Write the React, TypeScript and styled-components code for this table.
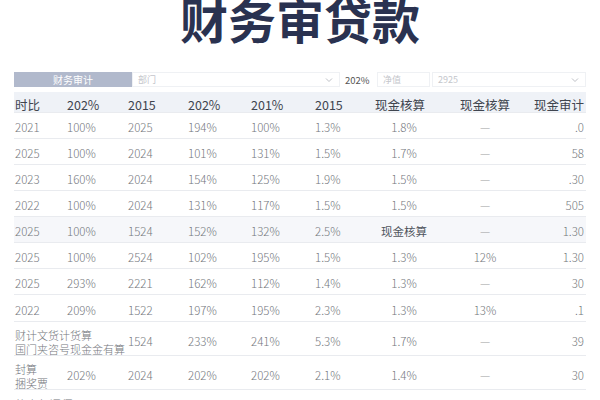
import React from "react";
import styled, { createGlobalStyle } from "styled-components";

const Global = createGlobalStyle`
  html, body { margin: 0; padding: 0; background: #ffffff; }
  body { font-family: "Noto Sans CJK SC", "Noto Sans", sans-serif; overflow: hidden; }
`;

const Page = styled.div`
  width: 600px;
  height: 400px;
  overflow: hidden;
  box-sizing: border-box;
  padding: 0 14px;
  display: flex;
  flex-direction: column;
`;

const Title = styled.h1`
  margin: 0;
  text-align: center;
  font-size: 48px;
  line-height: 36px;
  font-weight: 700;
  color: #2a3250;
  letter-spacing: 0;
`;

const FilterBar = styled.div`
  margin-top: 36px;
  height: 17px;
  display: flex;
  align-items: stretch;
  font-size: 9px;
  color: #c4c6cb;
`;

const FilterLabel = styled.div`
  width: 118px;
  background: #b1b9cc;
  color: #ffffff;
  font-size: 10px;
  display: flex;
  align-items: center;
  justify-content: center;
`;

const Field = styled.div<{ $w: number }>`
  width: ${(p) => p.$w}px;
  box-sizing: border-box;
  border: 1px solid #eff1f4;
  background: #fff;
  display: flex;
  align-items: center;
  justify-content: space-between;
  padding: 0 6px 0 5px;
`;

const FilterValue = styled.div`
  width: 37px;
  display: flex;
  align-items: center;
  padding-left: 5px;
  box-sizing: border-box;
  font-size: 9.5px;
  color: #555;
`;

const Gap = styled.div`
  width: 2px;
`;

const Chevron = () => (
  <svg width="8" height="6" viewBox="0 0 8 6">
    <path d="M1 1.5 L4 4.5 L7 1.5" fill="none" stroke="#b5b8be" strokeWidth="0.9" />
  </svg>
);

const Table = styled.div`
  margin-top: 5px;
  display: flex;
  flex-direction: column;
`;

const Row = styled.div<{ $h: number; $bg?: string; $head?: boolean }>`
  height: ${(p) => p.$h}px;
  display: grid;
  grid-template-columns: 52px 61px 60px 63px 64px 41px 90px 80px 1fr;
  align-items: center;
  background: ${(p) => p.$bg || "transparent"};
  border-bottom: 1px solid #e9ebef;
  box-sizing: border-box;
  padding-top: 4px;
  font-size: ${(p) => (p.$head ? "12.5px" : "11.5px")};
  font-weight: ${(p) => (p.$head ? 400 : 300)};
  color: ${(p) => (p.$head ? "#40454f" : "#74777d")};
`;

const Cell = styled.div<{ $align?: "left" | "center" | "right"; $span?: number; $pad?: number }>`
  text-align: ${(p) => p.$align || "left"};
  padding-left: ${(p) => (p.$pad !== undefined ? p.$pad : 1)}px;
  padding-right: ${(p) => (p.$align === "right" ? 2 : 0)}px;
  grid-column: span ${(p) => p.$span || 1};
  white-space: nowrap;
  line-height: 13px;
`;

const MultiLine = styled(Cell)`
  font-size: 11px;
  line-height: 14px;
  padding-top: 2px;
`;

const Dash = styled.span`
  color: #9a9ca1;
`;

const CjkValue = styled.span`
  color: #50555d;
  font-weight: 400;
`;

type RowData = {
  c: (string | React.ReactNode)[];
  h?: number;
  bg?: string;
};

const rows: RowData[] = [
  { c: ["2021", "100%", "2025", "194%", "100%", "1.3%", "1.8%", "—", ".0"] },
  { c: ["2025", "100%", "2024", "101%", "131%", "1.5%", "1.7%", "—", "58"] },
  { c: ["2023", "160%", "2024", "154%", "125%", "1.9%", "1.5%", "—", ".30"] },
  { c: ["2022", "100%", "2024", "131%", "117%", "1.5%", "1.5%", "—", "505"] },
  {
    c: ["2025", "100%", "1524", "152%", "132%", "2.5%", <CjkValue>现金核算</CjkValue>, "—", "1.30"],
    bg: "#f6f7fa",
  },
  { c: ["2025", "100%", "2524", "102%", "195%", "1.5%", "1.3%", "12%", "1.30"] },
  { c: ["2025", "293%", "2221", "162%", "112%", "1.4%", "1.3%", "—", "30"] },
  { c: ["2022", "209%", "1522", "197%", "195%", "2.3%", "1.3%", "13%", ".1"], h: 27 },
];

const renderTail = (vals: (string | React.ReactNode)[]) => {
  const n = vals.length;
  return vals.map((v, i) => {
    const idx = i + (9 - n);
    const content = v === "—" ? <Dash>—</Dash> : v;
    if (idx === 6) return <Cell key={i} $align="center" $pad={8}>{content}</Cell>;
    if (idx === 7) return <Cell key={i} $align="center" $pad={0}>{content}</Cell>;
    if (idx === 8) return <Cell key={i} $align="right" $pad={0}>{content}</Cell>;
    return <Cell key={i}>{content}</Cell>;
  });
};

export default function App() {
  return (
    <Page>
      <Global />
      <Title>财务审贷款</Title>
      <FilterBar>
        <FilterLabel>财务审计</FilterLabel>
        <Field $w={208}>
          <span>部门</span>
          <Chevron />
        </Field>
        <FilterValue>202%</FilterValue>
        <Field $w={53}>
          <span>净值</span>
        </Field>
        <Gap />
        <Field $w={154}>
          <span>2925</span>
          <Chevron />
        </Field>
      </FilterBar>
      <Table>
        <Row $h={21} $head $bg="#eff2f7">
          <Cell>时比</Cell>
          <Cell>202%</Cell>
          <Cell>2015</Cell>
          <Cell>202%</Cell>
          <Cell>201%</Cell>
          <Cell>2015</Cell>
          <Cell $align="center" $pad={0}>现金核算</Cell>
          <Cell $align="center" $pad={0}>现金核算</Cell>
          <Cell $align="right" $pad={0}>现金审计</Cell>
        </Row>
        {rows.map((r, i) => (
          <Row key={i} $h={r.h || 26} $bg={r.bg}>
            {renderTail(r.c)}
          </Row>
        ))}
        <Row $h={34}>
          <MultiLine $span={2}>
            财计文货计货算
            <br />
            国门夹咨号现金金有算
          </MultiLine>
          {renderTail(["1524", "233%", "241%", "5.3%", "1.7%", "—", "39"])}
        </Row>
        <Row $h={34}>
          <MultiLine>
            封算
            <br />
            捆奖贾
          </MultiLine>
          {renderTail(["202%", "2024", "202%", "202%", "2.1%", "1.4%", "—", "30"])}
        </Row>
        <Row $h={26}>
          <Cell $span={2}>债表年评师</Cell>
          {renderTail(["2024", "201%", "198%", "1.6%", "1.5%", "—", "28"])}
        </Row>
      </Table>
    </Page>
  );
}
